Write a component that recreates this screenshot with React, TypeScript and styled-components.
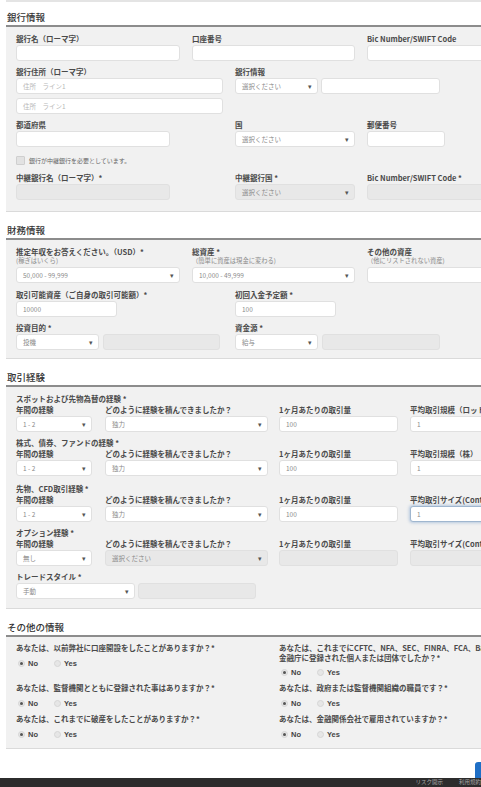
import React from "react";
import styled, { createGlobalStyle, css } from "styled-components";

const GlobalStyle = createGlobalStyle`
  html, body {
    margin: 0;
    padding: 0;
    background: #ffffff;
    overflow: hidden;
  }
  body {
    font-family: "Noto Sans CJK JP", "Noto Sans", "Liberation Sans", sans-serif;
    color: #444;
  }
`;

const Page = styled.div`
  width: 481px;
  height: 787px;
  display: flex;
  flex-direction: column;
  overflow: hidden;
`;

const Content = styled.div`
  padding-left: 6px;
  display: flex;
  flex-direction: column;
`;

const TopStub = styled.div`
  height: 2px;
  background: #e4e4e4;
`;

const Section = styled.section<{ $mt?: number }>`
  margin-top: ${(p) => p.$mt ?? 3}px;
`;

const Heading = styled.h2`
  margin: 0;
  height: 25px;
  display: flex;
  align-items: flex-end;
  padding: 0 0 2px 1px;
  box-sizing: border-box;
  border-bottom: 2px solid #8c8c8c;
  font-size: 9.5px;
  line-height: 12px;
  font-weight: 500;
  color: #333;
`;

const Panel = styled.div<{ $pt?: number; $pb?: number }>`
  background: #f1f1f1;
  border-bottom: 1px solid #dadada;
  padding: ${(p) => p.$pt ?? 7}px 0 ${(p) => p.$pb ?? 10}px 10px;
  overflow: hidden;
`;

const Row = styled.div<{ $mt?: number }>`
  display: flex;
  align-items: flex-start;
  margin-top: ${(p) => p.$mt ?? 0}px;
`;

const Field = styled.div<{ $w?: number }>`
  flex-shrink: 0;
  ${(p) => (p.$w ? css`width: ${p.$w}px;` : css`flex: 1 0 auto;`)}
  display: flex;
  flex-direction: column;
`;

const Label = styled.div<{ $tight?: boolean }>`
  font-size: 7.5px;
  line-height: 9px;
  font-weight: 700;
  color: #4a4a4a;
  white-space: nowrap;
  margin-bottom: ${(p) => (p.$tight ? 0 : 2)}px;
`;

const GroupLabel = styled(Label)`
  margin-bottom: 1px;
`;

const SubLabel = styled.div`
  font-size: 6.3px;
  line-height: 9px;
  color: #8a8a8a;
  white-space: nowrap;
  margin-bottom: 2px;
`;

const Inline = styled.div<{ $gap?: number }>`
  display: flex;
  gap: ${(p) => p.$gap ?? 4}px;
`;

const Stack = styled.div`
  display: flex;
  flex-direction: column;
  gap: 4px;
`;

const Box = styled.div<{ $w: number; $disabled?: boolean; $focus?: boolean; $ph?: boolean }>`
  box-sizing: border-box;
  flex-shrink: 0;
  width: ${(p) => p.$w}px;
  height: 16px;
  border: 1px solid ${(p) => (p.$focus ? "#9fb6cf" : "#e0e0e0")};
  border-radius: 3px;
  background: ${(p) => (p.$disabled ? "#e8e8e8" : "#ffffff")};
  box-shadow: ${(p) => (p.$focus ? "0 0 3px 1px rgba(110,150,200,0.45)" : "none")};
  font-size: 6.5px;
  line-height: 14px;
  padding: 0 6px;
  color: ${(p) => (p.$ph ? "#b8b8b8" : "#8a8a8a")};
  white-space: nowrap;
  overflow: hidden;
`;

const Select = styled(Box)`
  position: relative;
  padding-right: 14px;
  &::after {
    content: "▾";
    position: absolute;
    right: 5px;
    top: 0;
    font-size: 7px;
    line-height: 14px;
    color: #555;
  }
`;

const CheckRow = styled.div`
  display: flex;
  align-items: center;
  gap: 4px;
  margin-top: 9px;
  height: 9px;
`;

const CheckBox = styled.span`
  width: 7px;
  height: 7px;
  border: 1px solid #cfcfcf;
  border-radius: 1px;
  background: #e2e2e2;
`;

const CheckText = styled.span`
  font-size: 6px;
  line-height: 9px;
  color: #666;
`;

const TradeGrid = styled.div<{ $mt?: number }>`
  display: grid;
  grid-template-columns: 89px 174px 131px 160px;
  margin-top: ${(p) => p.$mt ?? 0}px;
`;

const GroupTitle = styled(GroupLabel)`
  grid-column: 1 / -1;
`;

const TradeSub = styled(Label)`
  margin-top: 1px;
`;

const OtherGrid = styled.div`
  display: grid;
  grid-template-columns: 263px 220px;
  row-gap: 6px;
  align-items: start;
`;

const Question = styled.div`
  display: flex;
  flex-direction: column;
`;

const QText = styled.div<{ $lh?: number }>`
  font-size: 7.5px;
  line-height: ${(p) => p.$lh ?? 9}px;
  font-weight: 700;
  color: #4a4a4a;
  white-space: nowrap;
`;

const RadioRow = styled.div<{ $mt?: number }>`
  display: flex;
  align-items: center;
  margin-top: ${(p) => p.$mt ?? 6}px;
  height: 10px;
  padding-left: 2px;
`;

const RadioItem = styled.label<{ $w: number }>`
  display: flex;
  align-items: center;
  gap: 3px;
  width: ${(p) => p.$w}px;
  font-size: 7.5px;
  font-weight: 700;
  color: #444;
  font-family: "Liberation Sans", "Noto Sans CJK JP", sans-serif;
`;

const RadioDot = styled.span<{ $on?: boolean }>`
  position: relative;
  width: 7px;
  height: 7px;
  box-sizing: border-box;
  border-radius: 50%;
  border: 1px solid #d6d6d6;
  background: #e6e6e6;
  &::after {
    content: "";
    display: ${(p) => (p.$on ? "block" : "none")};
    position: absolute;
    left: 1px;
    top: 1px;
    width: 3px;
    height: 3px;
    border-radius: 50%;
    background: #555;
  }
`;

const Spacer = styled.div`
  flex: 1;
  position: relative;
`;

const BlueButton = styled.div`
  position: absolute;
  right: -6px;
  bottom: 0;
  width: 12px;
  height: 16px;
  border-radius: 3px 0 0 0;
  background: #1f6fc6;
`;

const Footer = styled.footer`
  height: 9px;
  background: #2c2c2c;
  display: flex;
  justify-content: flex-end;
  align-items: center;
  gap: 16px;
  overflow: hidden;
`;

const FooterLink = styled.span`
  font-size: 5.5px;
  line-height: 9px;
  color: #a8a8a8;
  white-space: nowrap;
`;

type TradeRow = {
  title: string;
  col4: string;
  years: string;
  how: string;
  volume: string;
  size: string;
  mt: number;
  disabledRest?: boolean;
  focusLast?: boolean;
};

const tradeRows: TradeRow[] = [
  { title: "スポットおよび先物為替の経験 *", col4: "平均取引規模（ロット）", years: "1 - 2", how: "独力", volume: "100", size: "1", mt: 0 },
  { title: "株式、債券、ファンドの経験 *", col4: "平均取引規模（株）", years: "1 - 2", how: "独力", volume: "100", size: "1", mt: 6 },
  { title: "先物、CFD取引経験 *", col4: "平均取引サイズ(Contract)", years: "1 - 2", how: "独力", volume: "100", size: "1", mt: 8, focusLast: true },
  { title: "オプション経験 *", col4: "平均取引サイズ(Contract)", years: "無し", how: "選択ください", volume: "", size: "", mt: 6, disabledRest: true },
];

const Radios = ({ mt }: { mt?: number }) => (
  <RadioRow $mt={mt}>
    <RadioItem $w={36}>
      <RadioDot $on />
      No
    </RadioItem>
    <RadioItem $w={40}>
      <RadioDot />
      Yes
    </RadioItem>
  </RadioRow>
);

export default function App() {
  return (
    <>
      <GlobalStyle />
      <Page>
        <Content>
          <TopStub />
          <Section $mt={0}>
            <Heading>銀行情報</Heading>
            <Panel $pb={11}>
              <Row>
                <Field $w={176}>
                  <Label>銀行名（ローマ字）</Label>
                  <Box $w={164} />
                </Field>
                <Field $w={175}>
                  <Label>口座番号</Label>
                  <Box $w={163} />
                </Field>
                <Field $w={180}>
                  <Label>Bic Number/SWIFT Code</Label>
                  <Box $w={170} />
                </Field>
              </Row>
              <Row $mt={6}>
                <Field $w={219}>
                  <Label>銀行住所（ローマ字）</Label>
                  <Stack>
                    <Box $w={207} $ph>住所　ライン1</Box>
                    <Box $w={207} $ph>住所　ライン1</Box>
                  </Stack>
                </Field>
                <Field $w={220}>
                  <Label>銀行情報</Label>
                  <Inline $gap={3}>
                    <Select $w={83}>選択ください</Select>
                    <Box $w={119} />
                  </Inline>
                </Field>
              </Row>
              <Row $mt={6}>
                <Field $w={219}>
                  <Label>都道府県</Label>
                  <Box $w={154} />
                </Field>
                <Field $w={132}>
                  <Label>国</Label>
                  <Select $w={120}>選択ください</Select>
                </Field>
                <Field $w={120}>
                  <Label>郵便番号</Label>
                  <Box $w={78} />
                </Field>
              </Row>
              <CheckRow>
                <CheckBox />
                <CheckText>銀行が中継銀行を必要としています。</CheckText>
              </CheckRow>
              <Row $mt={8}>
                <Field $w={219}>
                  <Label>中継銀行名（ローマ字）*</Label>
                  <Box $w={154} $disabled />
                </Field>
                <Field $w={132}>
                  <Label>中継銀行国 *</Label>
                  <Select $w={120} $disabled>選択ください</Select>
                </Field>
                <Field $w={180}>
                  <Label>Bic Number/SWIFT Code *</Label>
                  <Box $w={170} $disabled />
                </Field>
              </Row>
            </Panel>
          </Section>

          <Section>
            <Heading>財務情報</Heading>
            <Panel $pb={8}>
              <Row>
                <Field $w={176}>
                  <Label $tight>推定年収をお答えください。（USD）*</Label>
                  <SubLabel>(稼ぎはいくら)</SubLabel>
                  <Select $w={164}>50,000 - 99,999</Select>
                </Field>
                <Field $w={175}>
                  <Label $tight>総資産 *</Label>
                  <SubLabel>（簡単に資産は現金に変わる)</SubLabel>
                  <Select $w={163}>10,000 - 49,999</Select>
                </Field>
                <Field $w={180}>
                  <Label $tight>その他の資産</Label>
                  <SubLabel>（他にリストされない資産)</SubLabel>
                  <Box $w={170} />
                </Field>
              </Row>
              <Row $mt={7}>
                <Field $w={219}>
                  <Label>取引可能資産（ご自身の取引可能額）*</Label>
                  <Box $w={101}>10000</Box>
                </Field>
                <Field $w={200}>
                  <Label>初回入金予定額 *</Label>
                  <Box $w={101}>100</Box>
                </Field>
              </Row>
              <Row $mt={6}>
                <Field $w={219}>
                  <Label>投資目的 *</Label>
                  <Inline>
                    <Select $w={83}>投機</Select>
                    <Box $w={117} $disabled />
                  </Inline>
                </Field>
                <Field $w={220}>
                  <Label>資金源 *</Label>
                  <Inline>
                    <Select $w={83}>給与</Select>
                    <Box $w={118} $disabled />
                  </Inline>
                </Field>
              </Row>
            </Panel>
          </Section>

          <Section>
            <Heading>取引経験</Heading>
            <Panel $pb={9}>
              {tradeRows.map((r, i) => (
                <TradeGrid key={i} $mt={r.mt}>
                  <GroupTitle>{r.title}</GroupTitle>
                  <TradeSub>年間の経験</TradeSub>
                  <TradeSub>どのように経験を積んできましたか？</TradeSub>
                  <TradeSub>1ヶ月あたりの取引量</TradeSub>
                  <TradeSub>{r.col4}</TradeSub>
                  <Select $w={76}>{r.years}</Select>
                  <Select $w={163} $disabled={r.disabledRest}>{r.how}</Select>
                  <Box $w={119} $disabled={r.disabledRest}>{r.volume}</Box>
                  <Box $w={120} $disabled={r.disabledRest} $focus={r.focusLast}>{r.size}</Box>
                </TradeGrid>
              ))}
              <Row $mt={6}>
                <Field>
                  <Label>トレードスタイル *</Label>
                  <Inline $gap={3}>
                    <Select $w={119}>手動</Select>
                    <Box $w={118} $disabled />
                  </Inline>
                </Field>
              </Row>
            </Panel>
          </Section>

          <Section>
            <Heading>その他の情報</Heading>
            <Panel $pt={6} $pb={9}>
              <OtherGrid>
                <Question>
                  <QText>あなたは、以前弊社に口座開設をしたことがありますか？*</QText>
                  <Radios />
                </Question>
                <Question>
                  <QText $lh={10}>
                    あなたは、これまでにCFTC、NFA、SEC、FINRA、FCA、BaFin、または
                    <br />
                    金融庁に登録された個人または団体でしたか？*
                  </QText>
                  <Radios mt={4} />
                </Question>
                <Question>
                  <QText>あなたは、監督機関とともに登録された事はありますか？*</QText>
                  <Radios />
                </Question>
                <Question>
                  <QText>あなたは、政府または監督機関組織の職員です？*</QText>
                  <Radios />
                </Question>
                <Question>
                  <QText>あなたは、これまでに破産をしたことがありますか？*</QText>
                  <Radios />
                </Question>
                <Question>
                  <QText>あなたは、金融関係会社で雇用されていますか？*</QText>
                  <Radios />
                </Question>
              </OtherGrid>
            </Panel>
          </Section>
        </Content>
        <Spacer>
          <BlueButton />
        </Spacer>
        <Footer>
          <FooterLink>リスク開示</FooterLink>
          <FooterLink>利用規約</FooterLink>
        </Footer>
      </Page>
    </>
  );
}
